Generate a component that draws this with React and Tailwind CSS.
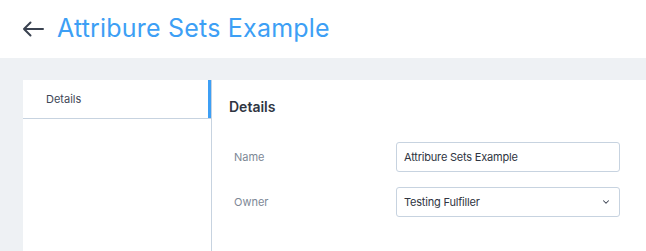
import React from "react";
import { ChevronDown } from "lucide-react";

const App = () => {
  return (
    <div
      className="w-[646px] h-[251px] overflow-hidden bg-[#eef1f4] flex flex-col"
      style={{ fontFamily: "Inter, 'Noto Sans', sans-serif" }}
    >
      {/* Header */}
      <div className="h-[58px] shrink-0 bg-white flex items-center pl-[22px]">
        <svg width="22" height="16" viewBox="0 0 22 16" className="text-[#3a4250]">
          <path d="M21 8H2M8.5 1.5L2 8l6.5 6.5" fill="none" stroke="currentColor" strokeWidth="2" strokeLinecap="round" strokeLinejoin="round" />
        </svg>
        <h1 className="ml-[13px] -mt-[2px] text-[25px] leading-none text-[#3d9ff5] tracking-[0.2px]">
          Attribure Sets Example
        </h1>
      </div>

      {/* Body */}
      <div className="flex flex-1 pt-[22px] pl-[23px]">
        {/* Sidebar */}
        <div className="w-[189px] bg-white border-r border-[#c7d3e0]">
          <div className="relative h-[39px] border-b border-[#c7d3e0] flex items-center pl-[23px] text-[11px] text-[#3e4756]">
            Details
            <span className="absolute right-0 top-0 h-full w-[3px] bg-[#3d9ff5]" />
          </div>
        </div>

        {/* Content */}
        <div className="flex-1 bg-white pl-[17px] pt-[16px]">
          <h2 className="text-[14px] font-semibold text-[#2f3542]">Details</h2>
          <div className="mt-[25px] flex flex-col gap-[15px] pr-[26px]">
            <div className="flex items-center">
              <label className="w-[167px] pl-[5px] text-[11px] text-[#7d8896]">Name</label>
              <div className="flex-1 h-[30px] border border-[#c7d3e0] rounded-[3px] flex items-center px-[7px] text-[11px] tracking-[-0.2px] text-[#2f3542]">
                Attribure Sets Example
              </div>
            </div>
            <div className="flex items-center">
              <label className="w-[167px] pl-[5px] text-[11px] text-[#7d8896]">Owner</label>
              <div className="flex-1 h-[30px] border border-[#c7d3e0] rounded-[3px] flex items-center justify-between pl-[7px] pr-[8px] text-[11px] tracking-[-0.2px] text-[#2f3542]">
                Testing Fulfiller
                <ChevronDown size={10} strokeWidth={2.5} className="text-[#3a4250]" />
              </div>
            </div>
          </div>
        </div>
      </div>
    </div>
  );
};

export default App;
